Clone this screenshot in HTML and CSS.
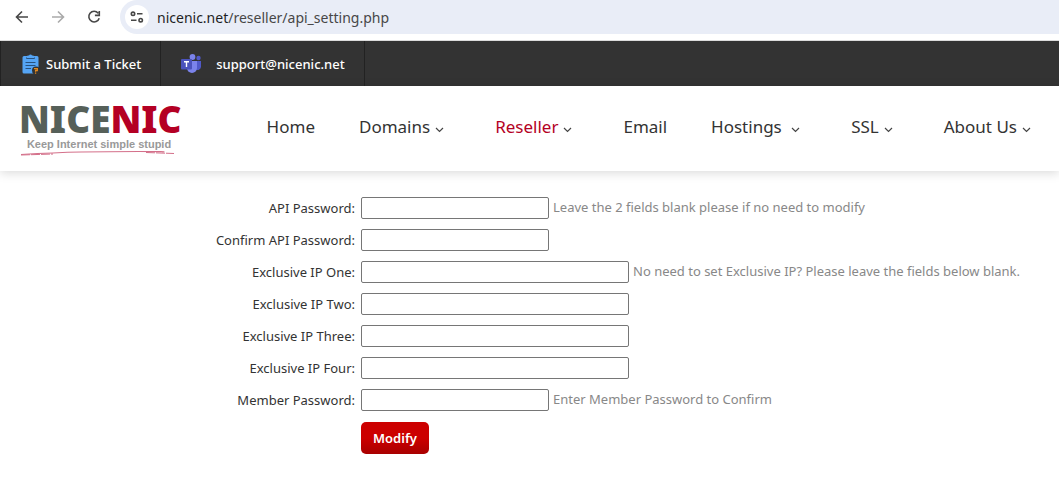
FILE: index.html
```
<!DOCTYPE html>
<html lang="en">
<head>
    <meta charset="utf-8">
    <title>API Setting</title>
    <link rel="stylesheet" href="styles.css">
</head>
<body>

<div class="browser-bar">
    <button class="browser-btn" aria-label="Back">
        <svg width="14" height="14" viewBox="0 0 14 14"><path d="M13 7H2M7 1.5L1.5 7L7 12.5"/></svg>
    </button>
    <button class="browser-btn disabled" aria-label="Forward">
        <svg width="14" height="14" viewBox="0 0 14 14"><path d="M1 7H12M7 1.5L12.5 7L7 12.5"/></svg>
    </button>
    <button class="browser-btn" aria-label="Reload">
        <svg width="14" height="14" viewBox="0 0 14 14"><path d="M11.2 3.2A5.3 5.3 0 1 0 12.2 8.2M12.3 1V5.4H7.9"/></svg>
    </button>
    <div class="address">
        <button class="site-info" aria-label="Site information">
            <svg width="14" height="12" viewBox="0 0 14 12"><circle cx="3" cy="2.8" r="1.7"/><path d="M7 2.8H12.5M1 9.2H6.5"/><circle cx="10.7" cy="9.2" r="1.7"/></svg>
        </button>
        <span class="url">nicenic.net<span class="path">/reseller/api_setting.php</span></span>
    </div>
</div>

<div class="topbar">
    <a class="top-link" href="#">
        <svg width="18" height="20" viewBox="0 0 18 20">
            <path fill="#55a5f5" d="M2 2H5.5V1.5H7A1.6 1.6 0 0 1 10 1.5H11.5V2H15A1.5 1.5 0 0 1 16.5 3.5V19.5H2A1.5 1.5 0 0 1 .5 18V3.5A1.5 1.5 0 0 1 2 2Z"/>
            <path stroke="#28527e" fill="none" d="M4.5 3.5V4.5H12.5V3.5M3.5 8.5H13.5M3.5 11.5H13.5M3.5 14.5H9"/>
            <circle cx="14" cy="16.5" r="4" fill="#333"/>
            <path stroke="#e58a1c" stroke-width="1.3" fill="none" d="M12 14.6H15.3V16.5H13.6V17.8M13.6 18.6V19.8"/>
        </svg>
        <span>Submit a Ticket</span>
    </a>
    <a class="top-link teams" href="#">
        <svg width="21" height="20" viewBox="0 0 21 20">
            <circle cx="17.5" cy="4" r="2.2" fill="#5059c9"/>
            <circle cx="11.5" cy="3" r="2.9" fill="#7b83eb"/>
            <path fill="#5059c9" d="M14 7H20V13A3.5 3.5 0 0 1 14 15Z"/>
            <path fill="#7b83eb" d="M6 7H16V14A5 5 0 0 1 6 14Z"/>
            <rect y="5" width="11" height="10.5" rx="1" fill="#4b53bc"/>
            <path stroke="#fff" stroke-width="1.4" d="M3 7.7H8M5.5 7.7V13"/>
        </svg>
        <span>support@nicenic.net</span>
    </a>
</div>

<header class="header">
    <a class="logo" href="#">
        <span class="logo-name">NICE<span class="red">NIC</span></span>
        <span class="slogan">Keep Internet simple stupid</span>
        <svg class="swoosh" width="160" height="6" viewBox="0 0 160 6"><path d="M2 4.5Q36 2.5 62 2T120 1.5T143 2" stroke-width="1.2"/><path d="M2 5L34 4M127 2.5L155 3.5" stroke-dasharray="9 1"/></svg>
    </a>
    <nav class="nav">
        <a href="#">Home</a>
        <a class="drop" href="#">Domains<svg width="9" height="6" viewBox="0 0 9 6"><path d="M1 1L4.5 4.5L8 1"/></svg></a>
        <a class="drop active" href="#">Reseller<svg width="9" height="6" viewBox="0 0 9 6"><path d="M1 1L4.5 4.5L8 1"/></svg></a>
        <a href="#">Email</a>
        <a class="drop" href="#">Hostings&nbsp;<svg width="9" height="6" viewBox="0 0 9 6"><path d="M1 1L4.5 4.5L8 1"/></svg></a>
        <a class="drop" href="#">SSL<svg width="9" height="6" viewBox="0 0 9 6"><path d="M1 1L4.5 4.5L8 1"/></svg></a>
        <a class="drop" href="#">About Us<svg width="9" height="6" viewBox="0 0 9 6"><path d="M1 1L4.5 4.5L8 1"/></svg></a>
    </nav>
</header>

<form class="api-form">
    <div class="row">
        <label for="apiPassword">API Password:</label>
        <input type="password" id="apiPassword">
        <span class="hint">Leave the 2 fields blank please if no need to modify</span>
    </div>
    <div class="row">
        <label for="confirmPassword">Confirm API Password:</label>
        <input type="password" id="confirmPassword">
    </div>
    <div class="row">
        <label for="ipOne">Exclusive IP One:</label>
        <input class="wide" type="text" id="ipOne">
        <span class="hint">No need to set Exclusive IP? Please leave the fields below blank.</span>
    </div>
    <div class="row">
        <label for="ipTwo">Exclusive IP Two:</label>
        <input class="wide" type="text" id="ipTwo">
    </div>
    <div class="row">
        <label for="ipThree">Exclusive IP Three:</label>
        <input class="wide" type="text" id="ipThree">
    </div>
    <div class="row">
        <label for="ipFour">Exclusive IP Four:</label>
        <input class="wide" type="text" id="ipFour">
    </div>
    <div class="row">
        <label for="memberPassword">Member Password:</label>
        <input type="password" id="memberPassword">
        <span class="hint">Enter Member Password to Confirm</span>
    </div>
    <div class="actions">
        <button class="modify" type="button">Modify</button>
    </div>
</form>

</body>
</html>
```
FILE: styles.css
```
* {
    box-sizing: border-box;
}
body {
    margin: 0;
    background-color: #fff;
    color: #333;
    font-family: 'Noto Sans', sans-serif;
    font-size: 13px;
}
a {
    color: inherit;
    text-decoration: none;
}
.browser-bar {
    display: flex;
    align-items: flex-start;
    gap: 22px;
    height: 41px;
    padding-left: 15px;
    border-bottom: 1px solid #dcdcdc;
}
.browser-btn {
    display: flex;
    align-items: center;
    width: 14px;
    height: 34px;
    padding: 0;
    border: none;
    background: none;
}
.browser-btn svg,
.site-info svg {
    fill: none;
    stroke: #474747;
    stroke-width: 1.6;
}
.browser-btn.disabled svg {
    stroke: #aaa;
}
.address {
    display: flex;
    flex: 1;
    align-items: center;
    gap: 8px;
    height: 34px;
    margin-left: -3px;
    padding-left: 5px;
    border-radius: 17px 0 0 17px;
    background-color: #e9edf7;
}
.site-info {
    display: flex;
    align-items: center;
    justify-content: center;
    width: 24px;
    height: 24px;
    padding: 0;
    border: none;
    border-radius: 50%;
    background-color: #fff;
}
.url {
    color: #1f1f1f;
    font-size: 14px;
}
.url .path {
    color: #474747;
}
.topbar {
    display: flex;
    height: 45px;
    border-left: 1px solid #222;
    background-color: #333;
    color: #fff;
    font-weight: 500;
}
.top-link {
    display: flex;
    align-items: center;
    gap: 6px;
    padding: 0 19px 0 21px;
    border-right: 1px solid #222;
}
.top-link.teams {
    gap: 14px;
    padding-left: 20px;
}
.header {
    display: flex;
    align-items: center;
    justify-content: space-between;
    height: 85px;
    padding: 0 28px 0 19px;
    box-shadow: 0 2px 10px rgba(0, 0, 0, 0.15);
}
.logo {
    display: flex;
    flex-direction: column;
    width: 160px;
    color: #566059;
}
.logo-name {
    font-size: 37px;
    font-weight: 900;
    line-height: 34px;
}
.logo-name .red {
    color: #b40024;
}
.slogan {
    margin-top: 2px;
    color: #999;
    font-family: 'Liberation Sans', sans-serif;
    font-size: 11px;
    font-weight: bold;
    line-height: 12px;
    text-align: center;
}
.swoosh {
    fill: none;
    stroke: #d4708a;
}
.nav {
    display: flex;
    gap: 44px;
    padding-bottom: 4px;
    font-size: 17px;
}
.nav a {
    line-height: 24px;
    white-space: nowrap;
}
.nav .drop {
    margin-right: 7px;
}
.nav .drop:last-child {
    margin-right: 0;
}
.nav svg {
    margin-left: 5px;
    vertical-align: 0;
    fill: none;
    stroke: #444;
    stroke-width: 1.2;
}
.nav .active {
    color: #b40024;
}
.api-form {
    padding-top: 21px;
}
.row {
    display: flex;
    align-items: center;
    height: 32px;
}
.row label {
    width: 361px;
    padding: 0 6px 1px 0;
    text-align: right;
}
.row input {
    width: 188px;
    height: 22px;
    padding: 1px 2px;
    border: 1px solid #767676;
    border-radius: 2px;
}
.row input.wide {
    width: 268px;
}
.hint {
    margin-left: 4px;
    padding-bottom: 2px;
    color: #888;
}
.actions {
    padding: 6px 0 0 361px;
}
.modify {
    height: 32px;
    padding: 0 12px;
    border: none;
    border-radius: 5px;
    background: linear-gradient(#c00 50%, #a80000);
    color: #fff;
    font-family: inherit;
    font-size: 13px;
    font-weight: 600;
    cursor: pointer;
}
```
